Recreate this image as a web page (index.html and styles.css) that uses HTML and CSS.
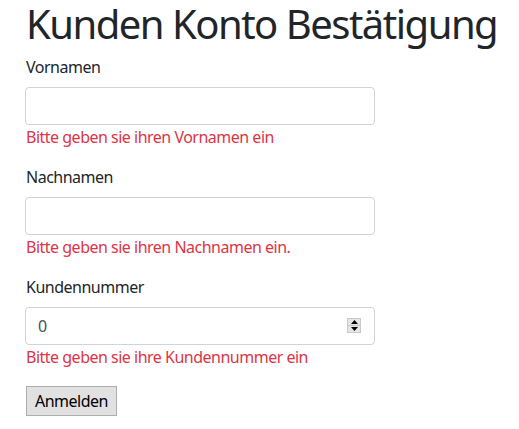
FILE: index.html
```html
<!DOCTYPE html>
<html lang="de">
<head>
<meta charset="utf-8">
<title>Kunden Konto Bestätigung</title>
<link rel="stylesheet" href="styles.css">
</head>
<body>
<div class="container">
  <h1 class="title">Kunden Konto Bestätigung</h1>
  <form class="form">
    <div class="group">
      <label class="label">Vornamen</label>
      <input class="control" type="text">
      <span class="error">Bitte geben sie ihren Vornamen ein</span>
    </div>
    <div class="group">
      <label class="label">Nachnamen</label>
      <input class="control" type="text">
      <span class="error">Bitte geben sie ihren Nachnamen ein.</span>
    </div>
    <div class="group">
      <label class="label">Kundennummer</label>
      <div class="number-wrap">
        <input class="control" type="text" value="0">
        <span class="spinner">
          <span class="spin-half"><svg width="7" height="4" viewBox="0 0 7 4"><path d="M0 4 L3.5 0 L7 4 Z" fill="#000"/></svg></span>
          <span class="spin-half"><svg width="7" height="4" viewBox="0 0 7 4"><path d="M0 0 L3.5 4 L7 0 Z" fill="#000"/></svg></span>
        </span>
      </div>
      <span class="error">Bitte geben sie ihre Kundennummer ein</span>
    </div>
    <button class="btn" type="button">Anmelden</button>
  </form>
</div>
</body>
</html>
```
FILE: styles.css
```css
html, body {
  margin: 0;
  padding: 0;
  background: #fff;
}
body {
  font-family: "Segoe UI", "Noto Sans", "Open Sans", sans-serif;
  font-size: 16px;
  line-height: 24px;
  letter-spacing: -0.5px;
  color: #212529;
}
.container {
  padding: 0 0 0 26px;
}
.title {
  margin: 0 0 7px 0;
  font-size: 40px;
  font-weight: 400;
  line-height: 48px;
  letter-spacing: -1.5px;
  white-space: nowrap;
}
.form {
  display: flex;
  flex-direction: column;
  align-items: flex-start;
}
.group {
  display: flex;
  flex-direction: column;
  margin-bottom: 16px;
  width: 350px;
}
.label {
  margin-bottom: 8px;
}
.control {
  box-sizing: border-box;
  width: 350px;
  height: 38px;
  margin: 0 0 0 -1px;
  padding: 6px 12px;
  border: 1px solid #ced4da;
  border-radius: 4px;
  font: inherit;
  letter-spacing: inherit;
  color: #495057;
  background: #fff;
}
.number-wrap {
  position: relative;
  width: 350px;
  height: 38px;
}
.spinner {
  position: absolute;
  left: 321px;
  top: 11px;
  width: 14px;
  height: 15px;
  display: flex;
  flex-direction: column;
  border: 1px solid #c8c8c8;
  box-sizing: border-box;
  background: #e6e6e6;
}
.spin-half {
  flex: 1;
  display: flex;
  align-items: center;
  justify-content: center;
}
.spin-half + .spin-half {
  border-top: 1px solid #c8c8c8;
}
.error {
  color: #dc3545;
}
.btn {
  box-sizing: border-box;
  height: 30px;
  padding: 0 8px;
  margin-top: 1px;
  font: inherit;
  letter-spacing: inherit;
  color: #000;
  background: #e1e1e1;
  border: 1px solid #adadad;
  border-radius: 0;
}
```
